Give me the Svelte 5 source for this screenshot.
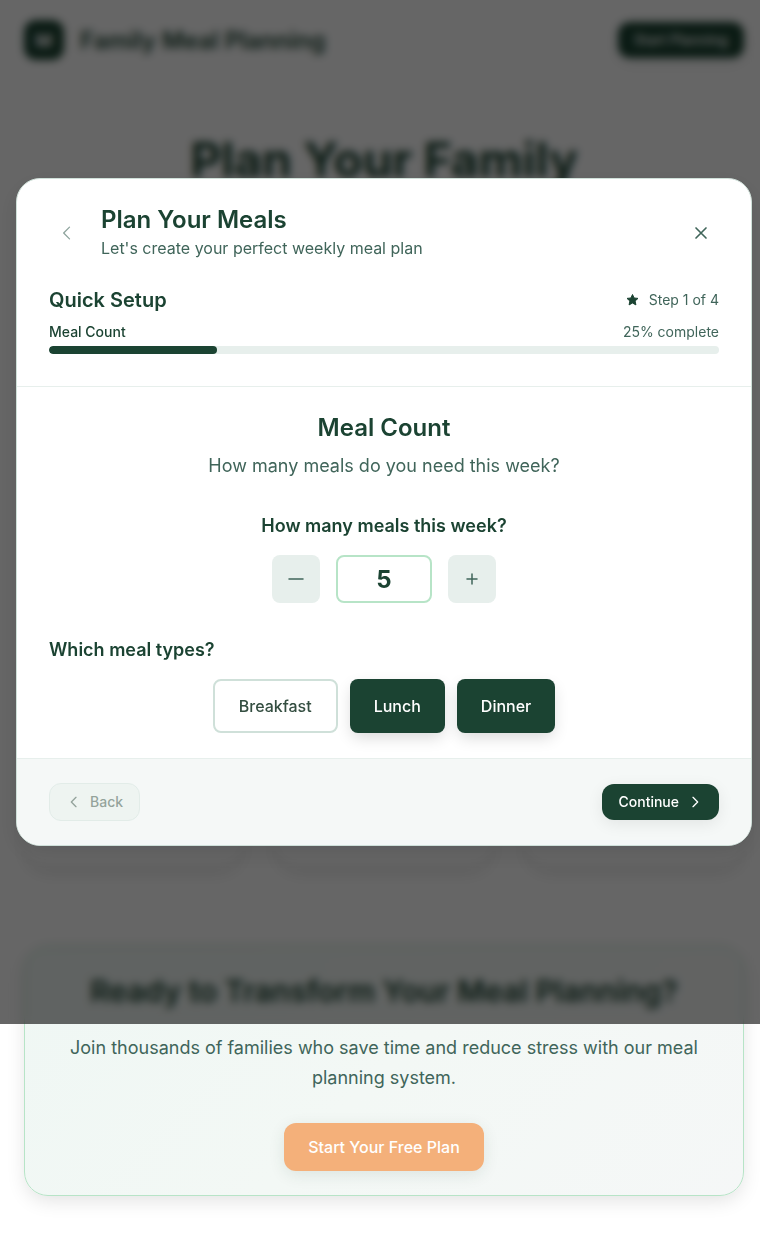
<script>
  const stepCount = 4;
  const step = 1;
  const progress = (step / stepCount) * 100;
  let meals = $state(5);
  let types = $state([
    { name: 'Breakfast', on: false },
    { name: 'Lunch', on: true },
    { name: 'Dinner', on: true }
  ]);
</script>

{#snippet chevron(direction, size)}
  <svg class="icon" class:small={size < 20} width={size} height={size} viewBox="0 0 24 24" aria-hidden="true">
    {#if direction === 'left'}
      <path d="M15 19 8 12l7-7" />
    {:else}
      <path d="m9 5 7 7-7 7" />
    {/if}
  </svg>
{/snippet}

<div class="page">
  <header class="topbar">
    <div class="brand">
      <span class="logo">M</span>
      <span class="brand-name">Family Meal Planning</span>
    </div>
    <button class="solid">Start Planning</button>
  </header>

  <main>
    <h1>Plan Your Family</h1>
    <div class="features">
      <div class="feature"></div>
      <div class="feature"></div>
      <div class="feature"></div>
    </div>
    <section class="cta">
      <h2>Ready to Transform Your Meal Planning?</h2>
      <p>Join thousands of families who save time and reduce stress with our meal planning system.</p>
      <button class="accent">Start Your Free Plan</button>
    </section>
  </main>

  <div class="overlay">
    <div class="modal" role="dialog" aria-modal="true" aria-labelledby="dialog-title">
      <div class="modal-head">
        <div class="head-row">
          <button class="ghost" disabled aria-label="Previous step">{@render chevron('left', 20)}</button>
          <div class="heading">
            <h2 id="dialog-title">Plan Your Meals</h2>
            <p>Let's create your perfect weekly meal plan</p>
          </div>
          <button class="ghost" aria-label="Close">
            <svg class="icon close" width="20" height="20" viewBox="0 0 24 24" aria-hidden="true">
              <path d="M6 18 18 6M6 6l12 12" />
            </svg>
          </button>
        </div>
        <div class="setup-row">
          <h3>Quick Setup</h3>
          <span class="step">
            <svg width="16" height="16" viewBox="0 0 16 16" aria-hidden="true">
              <path class="star" d="M7.500 2.500 9.100 6l3.900.4-2.900 2.600.8 3.900-3.400-1.900-3.400 1.900.8-3.900L2 6.400 5.900 6Z" />
            </svg>
            Step {step} of {stepCount}
          </span>
        </div>
        <div class="progress-row">
          <strong>Meal Count</strong>
          <span>{progress}% complete</span>
        </div>
        <div class="track"><div class="fill" style="width: {progress}%"></div></div>
      </div>

      <div class="modal-body">
        <h2>Meal Count</h2>
        <p class="lead">How many meals do you need this week?</p>
        <label class="question centered" for="meals">How many meals this week?</label>
        <div class="stepper">
          <button aria-label="Fewer meals" onclick={() => (meals = Math.max(1, meals - 1))}>
            <svg class="icon" width="24" height="24" viewBox="0 0 24 24" aria-hidden="true"><path d="M5 12h14" /></svg>
          </button>
          <input id="meals" type="text" inputmode="numeric" bind:value={meals} />
          <button aria-label="More meals" onclick={() => (meals += 1)}>
            <svg class="icon" width="24" height="24" viewBox="0 0 24 24" aria-hidden="true"><path d="M7 12h10M12 7v10" /></svg>
          </button>
        </div>
        <h3 class="question">Which meal types?</h3>
        <div class="types">
          {#each types as type}
            <button class:on={type.on} aria-pressed={type.on} onclick={() => (type.on = !type.on)}>{type.name}</button>
          {/each}
        </div>
      </div>

      <div class="modal-foot">
        <button class="back" disabled>{@render chevron('left', 16)}Back</button>
        <button class="solid">Continue{@render chevron('right', 16)}</button>
      </div>
    </div>
  </div>
</div>

<style>
  :global(body) {
    margin: 0;
    background: #fff;
  }

  .page {
    position: relative;
    padding: 0 16px 49px 24px;
    font-family: Inter, sans-serif;
    font-size: 16px;
    color: #1b4332;
  }

  .page * {
    box-sizing: border-box;
  }

  h1, h2, h3, p {
    margin: 0;
  }

  button, input {
    font-family: inherit;
    border: 0;
    margin: 0;
  }

  button {
    display: inline-flex;
    align-items: center;
    justify-content: center;
    padding: 0;
    font-size: 16px;
    font-weight: 500;
    cursor: pointer;
  }

  .icon {
    display: block;
    fill: none;
    stroke: currentColor;
    stroke-width: 1.5;
    stroke-linecap: round;
    stroke-linejoin: round;
  }

  .small {
    stroke-width: 2;
  }

  .solid {
    gap: 8px;
    height: 36px;
    padding: 0 16px;
    border-radius: 12px;
    background: #1b4332;
    color: #fff;
    font-size: 14px;
    line-height: 16px;
    box-shadow: 0 4px 16px rgba(0, 0, 0, 0.08);
  }

  .topbar {
    display: flex;
    align-items: center;
    justify-content: space-between;
    height: 80px;
  }

  .brand {
    display: flex;
    align-items: center;
    gap: 16px;
  }

  .logo {
    display: grid;
    place-items: center;
    width: 40px;
    height: 40px;
    border-radius: 12px;
    background: #1b4332;
    color: #fff;
    font-size: 18px;
    font-weight: 700;
  }

  .brand-name {
    font-size: 24px;
    font-weight: 600;
  }

  h1 {
    padding-top: 50px;
    font-size: 48px;
    line-height: 60px;
    font-weight: 700;
    text-align: center;
  }

  .features {
    display: grid;
    grid-template-columns: repeat(3, 1fr);
    gap: 32px;
    margin-top: 436px;
  }

  .feature {
    min-height: 240px;
    border-radius: 24px;
    background: #fff;
    box-shadow: 0 8px 16px -4px rgba(0, 0, 0, 0.14);
  }

  .cta {
    margin-top: 80px;
    padding: 24px;
    border: 1px solid #b7e4c7;
    border-radius: 24px;
    background: linear-gradient(135deg, #eff7f4, #f3f8f5 50%, #f5f7f7);
    box-shadow: 0 6px 20px -2px rgba(0, 0, 0, 0.12);
    text-align: center;
  }

  .cta h2 {
    font-size: 30px;
    line-height: 40px;
    font-weight: 600;
  }

  .cta p {
    margin: 22px 0 30px;
    font-size: 18px;
    line-height: 30px;
    color: #40655a;
  }

  .accent {
    height: 48px;
    padding: 0 24px;
    border-radius: 12px;
    background: #f4b07a;
    color: #fff;
    box-shadow: 0 4px 16px rgba(27, 67, 50, 0.1);
  }

  .overlay {
    position: absolute;
    top: 0;
    left: 0;
    right: 0;
    display: flex;
    align-items: center;
    height: 1024px;
    padding: 0 8px 0 16px;
    box-sizing: border-box;
    background: rgba(0, 0, 0, 0.6);
    backdrop-filter: blur(4px);
  }

  .modal {
    flex: 1;
    overflow: hidden;
    border: 1px solid #cfe0d9;
    border-radius: 24px;
    background: #fff;
    box-shadow: 0 8px 24px rgba(0, 0, 0, 0.1);
  }

  .modal-head {
    padding: 25px 32px 32px;
    border-bottom: 1px solid #e7efec;
  }

  .head-row {
    display: flex;
    align-items: center;
    gap: 16px;
  }

  .heading {
    flex: 1;
  }

  .modal h2 {
    font-size: 24px;
    line-height: 32px;
    font-weight: 600;
  }

  .heading p {
    line-height: 25px;
    color: #40655a;
  }

  .ghost {
    width: 36px;
    height: 36px;
    background: none;
    color: #40655a;
  }

  .ghost:disabled {
    opacity: 0.6;
  }

  .close {
    stroke-width: 2;
  }

  .setup-row, .progress-row {
    display: flex;
    align-items: center;
    justify-content: space-between;
    font-size: 14px;
    color: #40655a;
  }

  .setup-row {
    margin-top: 24px;
    line-height: 30px;
  }

  .setup-row h3 {
    font-size: 20px;
    font-weight: 600;
    color: #1b4332;
  }

  .step {
    display: flex;
    align-items: center;
    gap: 8px;
  }

  .star {
    fill: #1b4332;
    stroke: #1b4332;
    stroke-linejoin: round;
  }

  .progress-row {
    margin: 8px 0 5px;
    line-height: 18px;
  }

  .progress-row strong {
    font-weight: 500;
    color: #1b4332;
  }

  .track {
    height: 8px;
    border-radius: 4px;
    background: #e7efec;
    overflow: hidden;
  }

  .fill {
    height: 100%;
    border-radius: 4px;
    background: #1b4332;
  }

  .modal-body {
    padding: 25px 32px;
  }

  .modal-body h2, .lead, .centered {
    text-align: center;
  }

  .lead {
    margin: 8px 0 32px;
    font-size: 18px;
    line-height: 28px;
    color: #40655a;
  }

  .question {
    display: block;
    font-size: 18px;
    line-height: 28px;
    font-weight: 600;
  }

  .stepper {
    display: flex;
    justify-content: center;
    gap: 16px;
    margin: 15px 0 33px;
  }

  .stepper button {
    width: 48px;
    height: 48px;
    border-radius: 8px;
    background: #e7efec;
    color: #40655a;
  }

  .stepper input {
    width: 96px;
    height: 48px;
    padding: 0;
    border: 2px solid #b7e4c7;
    border-radius: 8px;
    background: #fff;
    color: #1b4332;
    font-size: 24px;
    font-weight: 700;
    text-align: center;
  }

  .types {
    display: flex;
    justify-content: center;
    gap: 12px;
    margin-top: 15px;
  }

  .types button {
    height: 54px;
    padding: 0 24px;
    border: 2px solid #cfe0d9;
    border-radius: 8px;
    background: #fff;
    color: #344e41;
  }

  .types .on {
    border: 0;
    background: #1b4332;
    color: #fff;
    box-shadow: 0 6px 16px -2px rgba(0, 0, 0, 0.16);
  }

  .modal-foot {
    display: flex;
    align-items: center;
    justify-content: space-between;
    padding: 24px 32px;
    border-top: 1px solid #e7efec;
    background: #f5f8f7;
  }

  .back {
    gap: 8px;
    height: 38px;
    padding: 0 16px;
    border: 1px solid #cfe0d9;
    border-radius: 12px;
    background: #e7efec;
    color: #344e41;
    font-size: 14px;
    line-height: 16px;
    opacity: 0.5;
  }
</style>
